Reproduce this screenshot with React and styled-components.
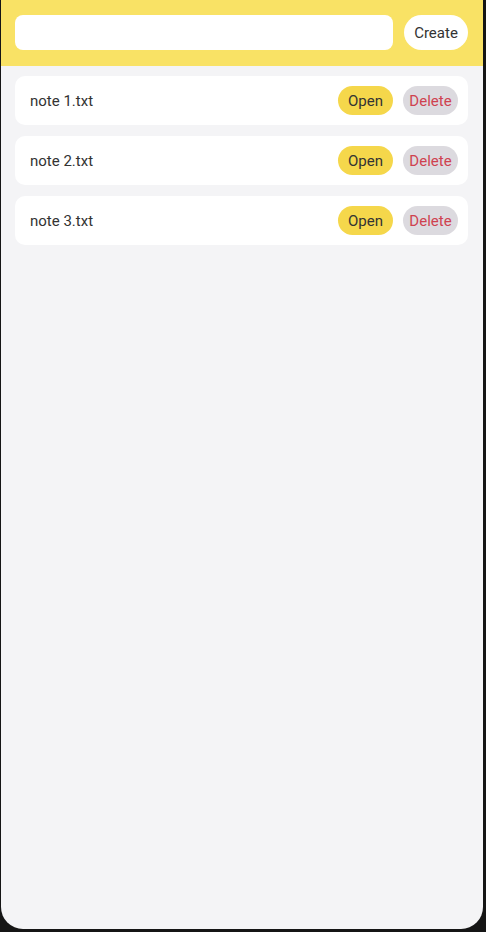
import styled, { createGlobalStyle } from "styled-components";

const GlobalStyle = createGlobalStyle`
  html, body {
    margin: 0;
    padding: 0;
    background: #151515;
  }
  body {
    font-family: Roboto, "Liberation Sans", sans-serif;
  }
`;

const Screen = styled.div`
  width: 482px;
  height: 929px;
  margin-left: 1px;
  background-color: #f4f4f6;
  border-radius: 0 0 22px 22px;
  overflow: hidden;
  display: flex;
  flex-direction: column;
`;

const Header = styled.header`
  background-color: #f9e265;
  display: flex;
  align-items: center;
  gap: 11px;
  padding: 15px 15px 16px 14px;
`;

const Input = styled.input`
  flex: 1;
  height: 35px;
  box-sizing: border-box;
  border: none;
  border-radius: 8px;
  background: #fff;
  padding: 0 12px;
  font-family: inherit;
  font-size: 15px;
  outline: none;
`;

const Pill = styled.button`
  border: none;
  border-radius: 999px;
  font-family: inherit;
  font-size: 15px;
  width: ${(p) => (p.$big ? "64px" : "55px")};
  height: ${(p) => (p.$big ? "35px" : "29px")};
  padding: 0;
  flex-shrink: 0;
  background-color: ${(p) => p.$bg};
  color: ${(p) => p.$color};
  cursor: pointer;
`;

const List = styled.main`
  display: flex;
  flex-direction: column;
  gap: 11px;
  padding: 10px 15px 10px 14px;
`;

const Row = styled.div`
  background: #fff;
  border-radius: 10px;
  height: 49px;
  display: flex;
  align-items: center;
  padding: 0 10px 0 15px;
  gap: 10px;
`;

const Name = styled.span`
  flex: 1;
  font-size: 15px;
  color: #333;
`;

const notes = ["note 1.txt", "note 2.txt", "note 3.txt"];

export default function App() {
  return (
    <>
      <GlobalStyle />
      <Screen>
        <Header>
          <Input />
          <Pill $big $bg="#fff" $color="#333">
            Create
          </Pill>
        </Header>
        <List>
          {notes.map((n) => (
            <Row key={n}>
              <Name>{n}</Name>
              <Pill $bg="#f5d74b" $color="#333">
                Open
              </Pill>
              <Pill $bg="#dcdadf" $color="#cf4250">
                Delete
              </Pill>
            </Row>
          ))}
        </List>
      </Screen>
    </>
  );
}
